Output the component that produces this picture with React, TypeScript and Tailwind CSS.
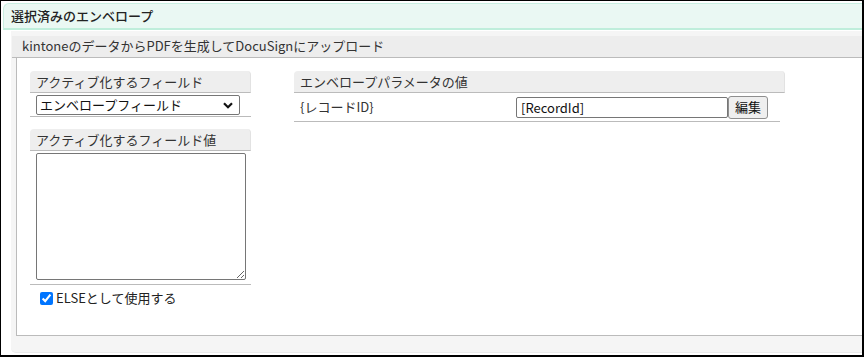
import React from 'react'

const font = { fontFamily: '"Noto Sans CJK JP", "Noto Sans", sans-serif' }

function SectionHead({ children, className = '' }: { children: React.ReactNode; className?: string }) {
  return (
    <div className={`h-[22px] rounded-t-[4px] bg-[#eeeeee] border-b border-[#bbbbbb] border-r border-r-[#e2e2e2] px-[6px] text-[13px] leading-[21px] text-[#333] ${className}`}>
      {children}
    </div>
  )
}

export default function App() {
  return (
    <div
      className="w-[864px] h-[357px] overflow-hidden bg-white border-t border-l border-r-2 border-b-2 border-black text-[#333]"
      style={font}
    >
      <div className="pt-[2px] pl-[2px] w-[900px]">
        {/* Title bar */}
        <div className="h-[27px] rounded-tl-[6px] border-l border-t border-[#c9efe1] border-b-2 border-b-[#bfeedb] bg-[#eaf8f3] px-[7px] text-[13px] leading-[23px] font-medium text-[#222]">
          選択済みのエンベロープ
        </div>

        {/* Outer panel */}
        <div className="ml-[8px] mt-[1px] h-[322px] rounded-bl-[5px] bg-[#f5f5f5] border-b border-[#ebebeb] pt-[5px] pl-[1px]">
          <div className="h-[22px] bg-[#ededed] border-b border-[#bbbbbb] pl-[10px] text-[13px] leading-[20px] text-[#333]">
            kintoneのデータからPDFを生成してDocuSignにアップロード
          </div>
          <div className="ml-[4px] h-[278px] bg-white border-l border-b border-[#bbbbbb] pl-[13px] pt-[13px] flex gap-[43px]">
            {/* Left column */}
            <div className="w-[221px] flex flex-col">
              <SectionHead>アクティブ化するフィールド</SectionHead>
              <div className="h-[24px] border-b border-[#bbbbbb] pl-[6px] pt-[2px]">
                <div className="relative w-[204px] h-[20px]">
                  <select
                    className="appearance-none block w-full h-full border border-[#767676] rounded-[2px] bg-white pl-[3px] text-[13px] leading-[18px] text-[#111]"
                    style={font}
                    defaultValue="envelope"
                  >
                    <option value="envelope">エンベロープフィールド</option>
                  </select>
                  <svg className="absolute right-[7px] top-[7px] pointer-events-none" width="10" height="7" viewBox="0 0 10 7">
                    <path d="M1 1.2 L5 5.2 L9 1.2" fill="none" stroke="#111" strokeWidth="2.2" />
                  </svg>
                </div>
              </div>

              <SectionHead className="mt-[12px]">アクティブ化するフィールド値</SectionHead>
              <div className="h-[134px] border-b border-[#bbbbbb] pl-[6px] pt-[2px]">
                <textarea
                  className="block w-[210px] h-[127px] border border-[#767676] rounded-[2px] bg-white resize"
                  style={font}
                />
              </div>
              <label className="flex items-center gap-[3px] pl-[10px] pt-[5px] text-[13px] leading-[16px] text-[#222]">
                <input type="checkbox" defaultChecked className="w-[13px] h-[13px] m-0 accent-[#0075ff]" />
                ELSEとして使用する
              </label>
            </div>

            {/* Right column */}
            <div className="w-[491px] flex flex-col">
              <SectionHead>エンベロープパラメータの値</SectionHead>
              <div className="w-[486px] h-[29px] border-b border-[#bbbbbb] flex items-center pl-[6px]">
                <span className="w-[216px] text-[13px] text-[#333]">{'{レコードID}'}</span>
                <input
                  type="text"
                  defaultValue="[RecordId]"
                  className="w-[212px] h-[21px] border border-[#767676] rounded-[2px] px-[4px] text-[13px] text-[#111] outline-none"
                  style={font}
                />
                <button
                  className="w-[40px] h-[23px] border border-[#8f8f8f] rounded-[3px] bg-[#efefef] text-[13px] text-[#111]"
                  style={font}
                >
                  編集
                </button>
              </div>
            </div>
          </div>
        </div>
      </div>
    </div>
  )
}
